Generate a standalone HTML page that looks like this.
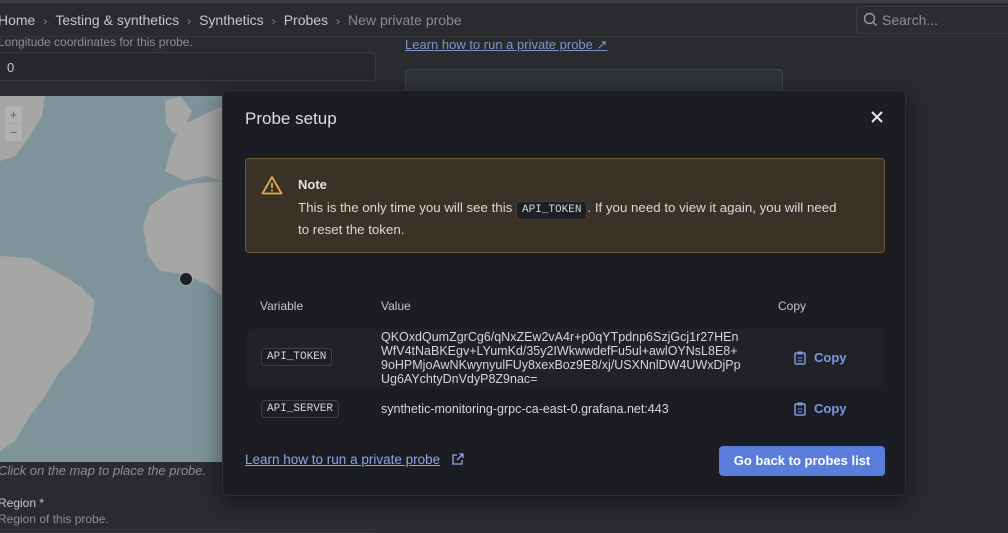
<!DOCTYPE html>
<html><head><style>
*{box-sizing:border-box;margin:0;padding:0}
body{width:1008px;height:532px;overflow:hidden;background:#2a2b2f;font-family:"Liberation Sans",sans-serif;position:relative;color:#ccccdc}
.abs{position:absolute}
.bc{top:12px;left:-2px;font-size:14px;color:#c6c7cc;white-space:nowrap}
.bc span.s{color:#85868c;margin:0 8px;font-size:12px}
.mono{font-family:"Liberation Mono",monospace}
.chip{display:inline-block;border:1px solid #3d3f46;border-radius:4px;background:#1d1f24;padding:2px 5px;font-size:11px;color:#d5d6dc}
.copy{color:#7a98e8;font-size:13px;font-weight:bold;display:flex;align-items:center;gap:8px}
</style></head><body>
<div class="abs" style="top:0;left:0;width:1008px;height:3px;background:#3a3d44"></div>
<div class="abs bc">Home<span class="s">›</span>Testing &amp; synthetics<span class="s">›</span>Synthetics<span class="s">›</span>Probes<span class="s">›</span><span style="color:#8a8b90">New private probe</span></div>
<div class="abs" style="top:6px;left:856px;width:160px;height:28px;border:1px solid #3a3c42;border-radius:4px;background:#2c2d31"></div>
<svg class="abs" style="top:12px;left:863px" width="15" height="15" viewBox="0 0 15 15"><circle cx="6.5" cy="6.5" r="5" fill="none" stroke="#999" stroke-width="1.4"/><path d="M10 10l3.5 3.5" stroke="#999" stroke-width="1.4"/></svg>
<div class="abs" style="top:12px;left:882px;font-size:14px;color:#8d8e93">Search...</div>
<div class="abs" style="top:36px;left:0;width:1008px;height:1px;background:#37383d"></div>
<div class="abs" style="top:35px;left:-2px;font-size:12px;color:#8d8e93">Longitude coordinates for this probe.</div>
<div class="abs" style="top:52px;left:-4px;width:380px;height:29px;border:1px solid #38393f;border-radius:4px;background:#27282c;padding:7px 10px;font-size:13px;color:#c6c7cc">0</div>
<div class="abs" style="top:37px;left:405px;font-size:13px;color:#7f93c9;text-decoration:underline">Learn how to run a private probe ↗</div>
<div class="abs" style="top:69px;left:405px;width:378px;height:40px;border:1px solid #40434c;border-radius:4px;background:#31333b"></div>
<!-- map -->
<svg class="abs" style="top:96px;left:0" width="222" height="366" viewBox="0 0 222 366">
<rect width="222" height="366" fill="#7f939b"/>
<path d="M0 0H45L42 20 30 40 15 60 0 65Z" fill="#a6a7a4"/>
<path d="M165 5l15-5 12 15-8 18-10 5 -8-10Z" fill="#a6a7a4"/>
<path d="M180 30L222 10V85L205 80 185 85 165 75 170 55Z" fill="#a6a7a4"/>
<path d="M222 85V200L210 190 185 178 160 175 148 160 143 130 150 110 170 95 190 88Z" fill="#a6a7a4"/>
<path d="M0 160L30 162 55 175 80 190 95 205 90 235 75 260 60 275 45 300 30 320 15 345 0 355Z" fill="#a6a7a4"/>
<rect x="5" y="10" width="17" height="17" fill="#bbb" opacity=".6"/><rect x="5" y="28" width="17" height="17" fill="#bbb" opacity=".6"/>
<text x="13.5" y="23" font-size="13" fill="#666" text-anchor="middle">+</text><text x="13.5" y="41" font-size="13" fill="#666" text-anchor="middle">−</text>
<circle cx="186" cy="183" r="6.5" fill="#1e1f24" stroke="#aaa" stroke-width="1"/>
</svg>
<div class="abs" style="top:463px;left:-2px;font-size:13px;font-style:italic;color:#8d8e93">Click on the map to place the probe.</div>
<div class="abs" style="top:496px;left:-2px;font-size:12px;color:#c6c7cc">Region *</div>
<div class="abs" style="top:512px;left:-2px;font-size:12px;color:#8d8e93">Region of this probe.</div>
<div class="abs" style="top:529px;left:0;width:376px;height:4px;border:1px solid #38393f"></div>
<!-- modal -->
<div class="abs" style="top:90px;left:222px;width:684px;height:406px;background:#1b1d22;border:1px solid #2e3036;border-radius:6px;box-shadow:0 6px 24px rgba(0,0,0,.5)">
 <div class="abs" style="top:18px;left:22px;font-size:17px;color:#dcdde2">Probe setup</div>
 <svg class="abs" style="top:19px;left:647px" width="14" height="14" viewBox="0 0 14 14"><path d="M2 2l10 10M12 2L2 12" stroke="#e5e5ea" stroke-width="2"/></svg>
 <div class="abs" style="top:67px;left:22px;width:640px;height:95px;background:#3a3226;border:1px solid #6e5a37;border-radius:4px">
  <svg class="abs" style="top:16px;left:15px" width="22" height="20" viewBox="0 0 22 20"><path d="M11 2L20.5 18.5H1.5Z" fill="none" stroke="#e2a84e" stroke-width="1.8" stroke-linejoin="round"/><path d="M11 8v5" stroke="#e2a84e" stroke-width="1.8"/><circle cx="11" cy="15.5" r="1" fill="#e2a84e"/></svg>
  <div class="abs" style="top:18px;left:52px;font-size:13px;font-weight:bold;color:#e1e1e6">Note</div>
  <div class="abs" style="top:39px;left:52px;width:590px;font-size:13.3px;line-height:20px;color:#d9d9de;white-space:nowrap">This is the only time you will see this <span class="chip mono" style="padding:0 5px;line-height:17px">API_TOKEN</span>. If you need to view it again, you will need<br>to reset the token.</div>
 </div>
 <div class="abs" style="top:208px;left:37px;font-size:12px;color:#c6c7cc">Variable</div>
 <div class="abs" style="top:208px;left:158px;font-size:12px;color:#c6c7cc">Value</div>
 <div class="abs" style="top:208px;left:555px;font-size:12px;color:#c6c7cc">Copy</div>
 <div class="abs" style="top:238px;left:24px;width:637px;height:58px;background:#202227;border-radius:3px"></div>
 <div class="abs chip mono" style="top:257px;left:38px">API_TOKEN</div>
 <div class="abs" style="top:239px;left:158px;font-size:12.5px;line-height:14px;color:#d5d6dc;white-space:nowrap">QKOxdQumZgrCg6/qNxZEw2vA4r+p0qYTpdnp6SzjGcj1r27HEn<br>WfV4tNaBKEgv+LYumKd/35y2IWkwwdefFu5ul+awlOYNsL8E8+<br>9oHPMjoAwNKwynyulFUy8xexBoz9E8/xj/USXNnlDW4UWxDjPp<br>Ug6AYchtyDnVdyP8Z9nac=</div>
 <div class="abs copy" style="top:259px;left:571px"><svg width="12" height="14" viewBox="0 0 12 14"><rect x="1" y="2" width="10" height="11" rx="1" fill="none" stroke="#7a98e8" stroke-width="1.5"/><rect x="3.5" y="0.5" width="5" height="3" fill="#7a98e8"/><path d="M3.5 7h5M3.5 10h5" stroke="#7a98e8"/></svg>Copy</div>
 <div class="abs chip mono" style="top:309px;left:38px">API_SERVER</div>
 <div class="abs" style="top:311px;left:158px;font-size:12.5px;color:#d5d6dc">synthetic-monitoring-grpc-ca-east-0.grafana.net:443</div>
 <div class="abs copy" style="top:310px;left:571px"><svg width="12" height="14" viewBox="0 0 12 14"><rect x="1" y="2" width="10" height="11" rx="1" fill="none" stroke="#7a98e8" stroke-width="1.5"/><rect x="3.5" y="0.5" width="5" height="3" fill="#7a98e8"/><path d="M3.5 7h5M3.5 10h5" stroke="#7a98e8"/></svg>Copy</div>
 <div class="abs" style="top:361px;left:22px;font-size:13.5px;color:#8ea6e6;text-decoration:underline">Learn how to run a private probe</div>
 <svg class="abs" style="top:362px;left:228px" width="13" height="13" viewBox="0 0 13 13"><path d="M6 2H2v9h9V7M8 1h4v4M12 1L6 7" fill="none" stroke="#8ea6e6" stroke-width="1.3"/></svg>
 <div class="abs" style="top:355px;left:496px;width:166px;height:30px;background:#5a7ddc;border-radius:4px;color:#fff;font-size:13px;font-weight:bold;text-align:center;line-height:30px">Go back to probes list</div>
</div>
</body></html>
